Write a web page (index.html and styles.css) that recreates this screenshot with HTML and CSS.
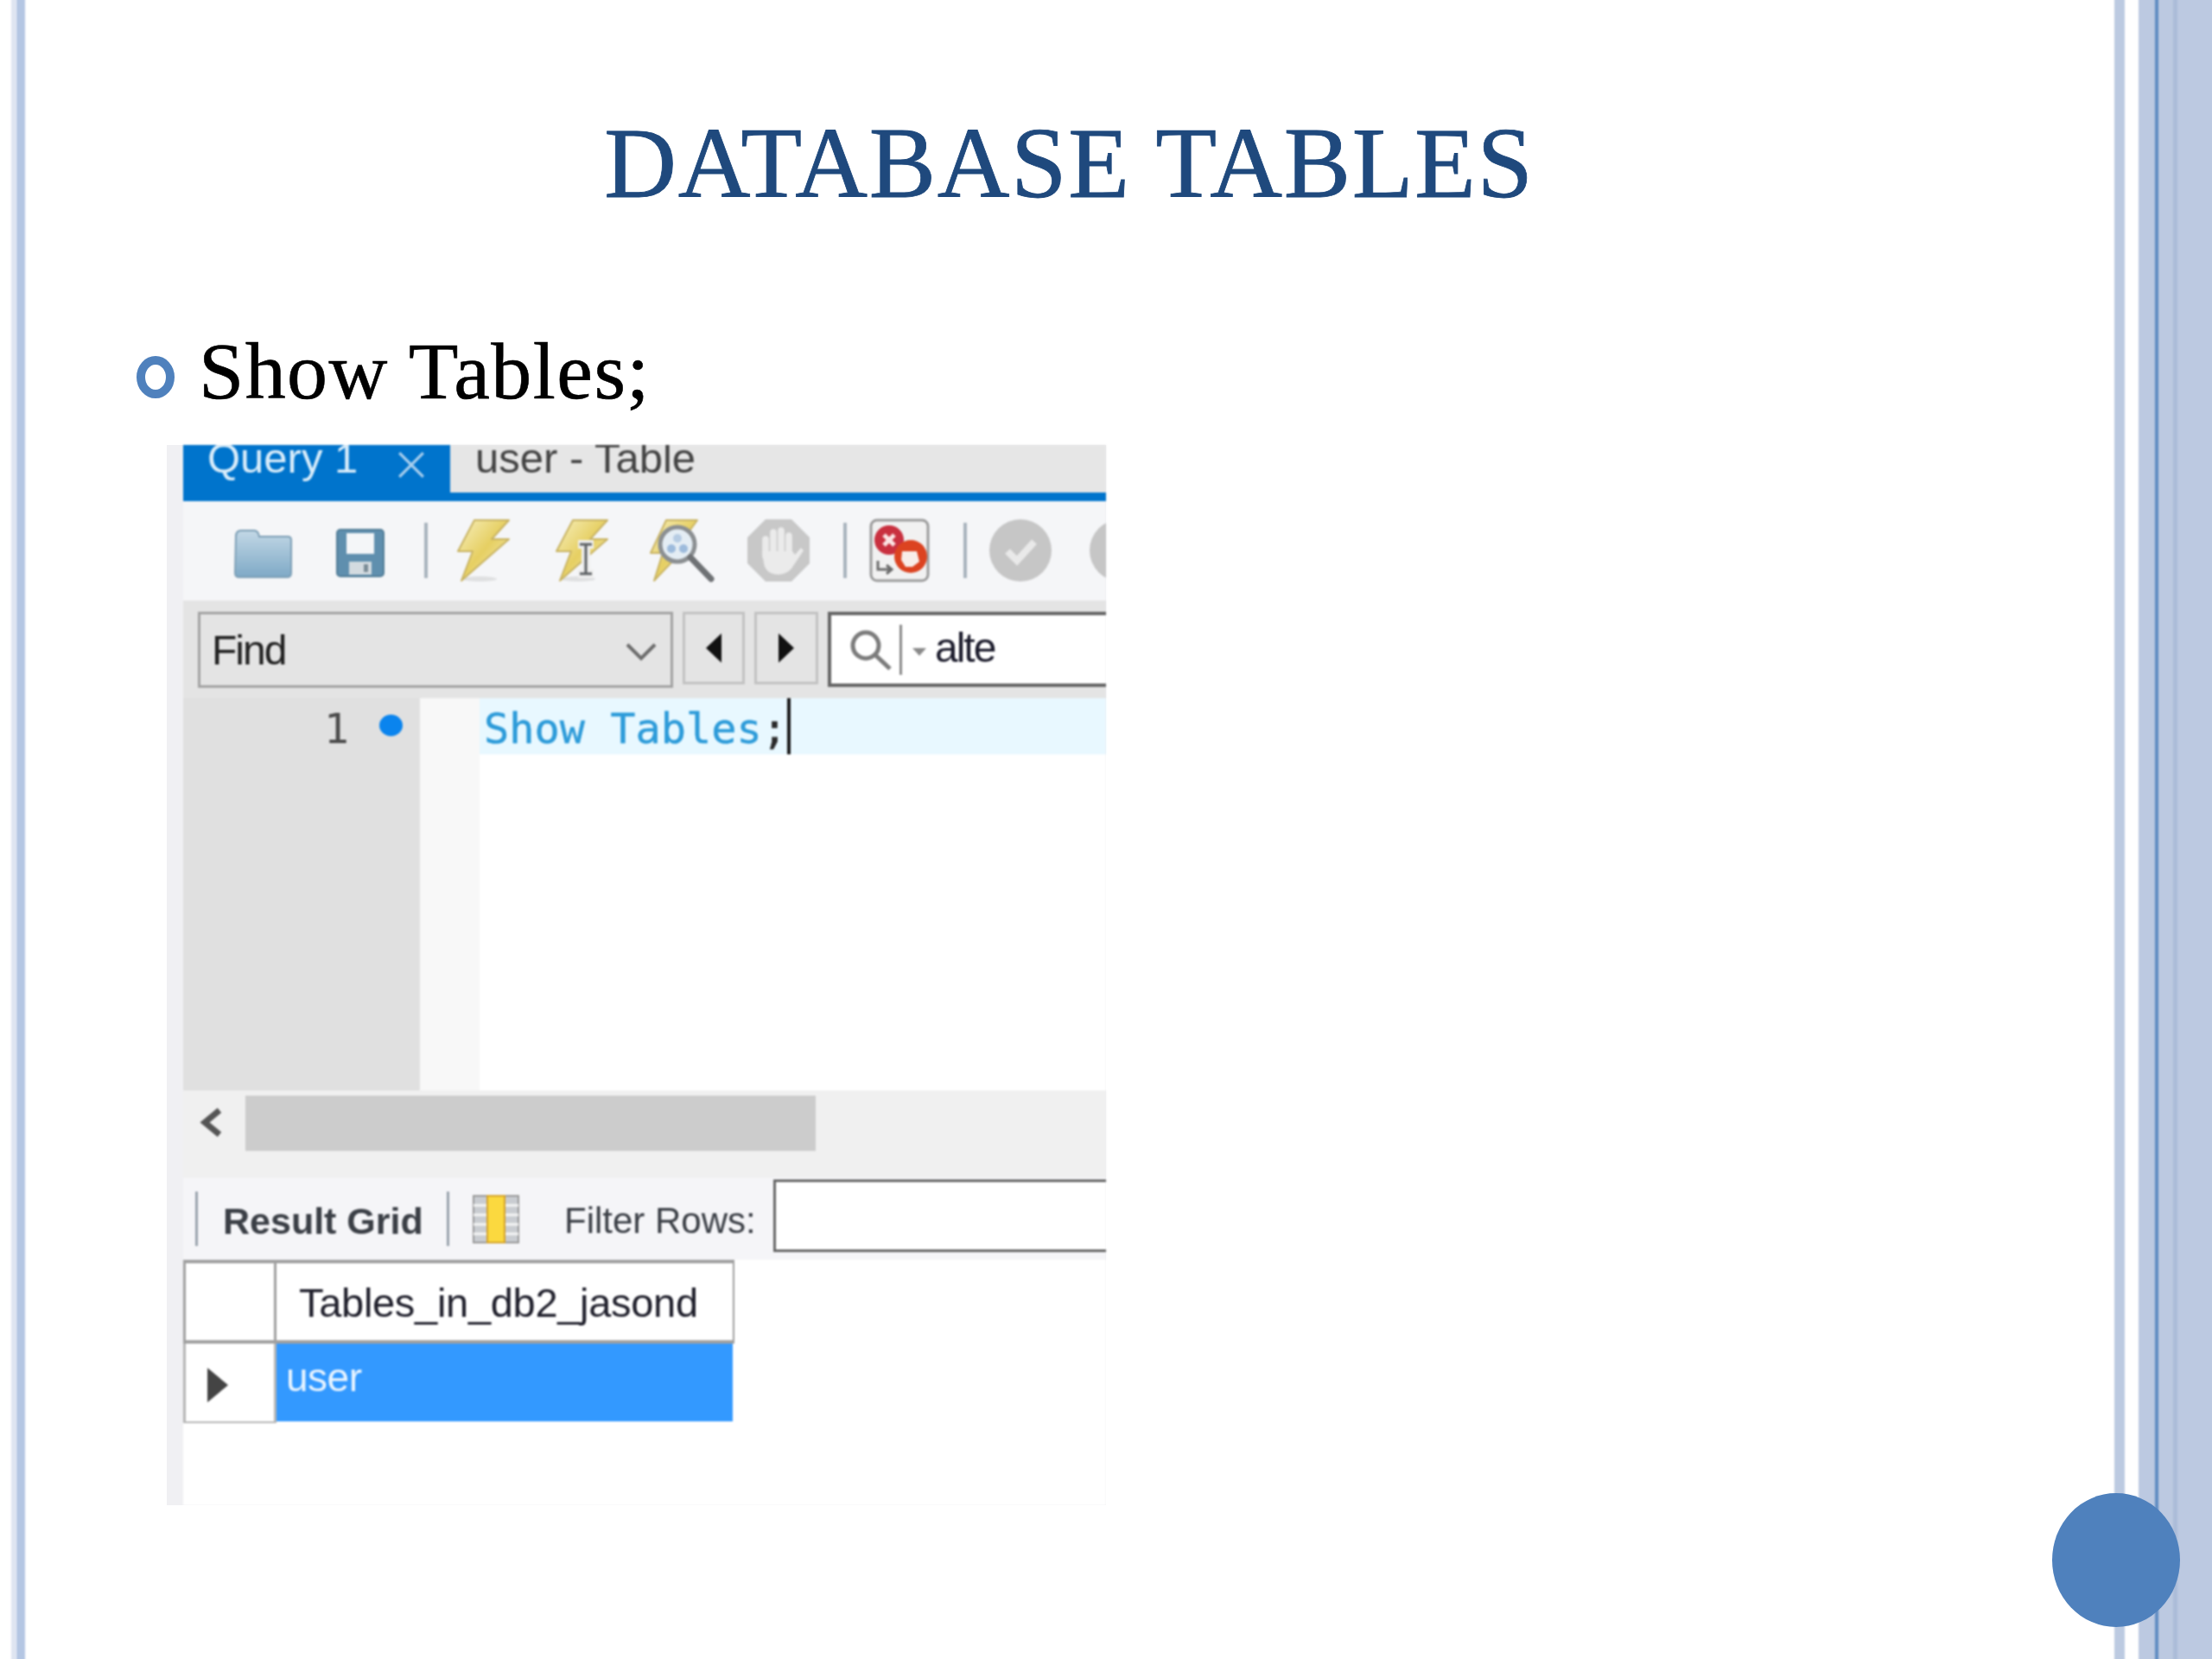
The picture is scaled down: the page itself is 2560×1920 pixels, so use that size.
FILE: index.html
```html
<!DOCTYPE html>
<html lang="en">
<head>
<meta charset="utf-8">
<title>Database Tables</title>
<link rel="stylesheet" href="styles.css">
</head>
<body>
<div class="slide">
  <div class="band band-l1"></div>
  <div class="band band-l2"></div>
  <div class="band band-r1"></div>
  <div class="band band-r2"></div>
  <div class="band band-r3"></div>
  <div class="band band-r4"></div>
  <div class="dot-big"></div>

  <main class="main">
    <h1 class="title">DATABASE TABLES</h1>
    <div class="bullet-row">
      <span class="ring"></span>
      <span class="bullet-text">Show Tables;</span>
    </div>
    <div class="shot">
      <div class="app">
        <div class="tabs">
          <div class="tab tab-on"><span class="tab-label">Query 1</span><span class="tab-x">
            <svg class="x-ico" viewBox="0 0 32 32"><path d="M3 3 29 29M29 3 3 29"/></svg></span></div>
          <div class="tab tab-off"><span class="tab-label">user - Table</span></div>
        </div>

        <div class="toolbar">
          <svg class="ic ic-folder" viewBox="0 0 68 58"><defs><linearGradient id="gf" x1="0" y1="0" x2="0" y2="1"><stop offset="0" stop-color="#c3d8e6"/><stop offset="1" stop-color="#7ea9c6"/></linearGradient></defs><path d="M3 10 Q3 3 9 3H24Q29 3 30 10H63Q67 10 67 14V52Q67 57 62 57H7Q2 57 2 52Z" fill="url(#gf)" stroke="#7d9fb6" stroke-width="2"/></svg>
          <svg class="ic ic-floppy" viewBox="0 0 56 56"><rect x="1" y="1" width="54" height="54" rx="4" fill="#5f8fae" stroke="#527d97" stroke-width="2"/><rect x="12" y="5" width="32" height="24" fill="#f4f6f8"/><rect x="15" y="38" width="26" height="15" fill="#d3dbe0"/><rect x="32" y="41" width="5" height="9" fill="#7b8c97"/></svg>
          <span class="sep sep-a"></span>
          <svg class="ic ic-bolt bolt-a" viewBox="0 0 62 74"><defs><linearGradient id="gb" x1="0" y1="0" x2="1" y2="1"><stop offset="0" stop-color="#f7f0c0"/><stop offset=".5" stop-color="#e6cf62"/><stop offset="1" stop-color="#f6efc0"/></linearGradient></defs><ellipse cx="26" cy="70" rx="20" ry="3" fill="#dfe0e1"/><path d="M20 2H60L40 24H60L5 72 18 38H1Z" fill="url(#gb)" stroke="#c9b464" stroke-width="2" stroke-linejoin="round"/></svg>
          <svg class="ic ic-bolt bolt-b" viewBox="0 0 62 74"><ellipse cx="26" cy="70" rx="20" ry="3" fill="#dfe0e1"/><path d="M20 2H60L40 24H60L5 72 18 38H1Z" fill="url(#gb)" stroke="#c9b464" stroke-width="2" stroke-linejoin="round"/><path d="M26 30H44M35 30V64M26 64H44" fill="none" stroke="#efefef" stroke-width="10"/><path d="M28 30H42M35 30V64M28 64H42" fill="none" stroke="#5d6164" stroke-width="3"/></svg>
          <svg class="ic ic-bmag" viewBox="0 0 76 74"><path d="M20 2H56L40 24H52L6 72 16 40H2Z" fill="url(#gb)" stroke="#c9b464" stroke-width="2" stroke-linejoin="round"/><circle cx="33" cy="30" r="20" fill="#e4edf4" stroke="#8b8f92" stroke-width="5"/><circle cx="26" cy="35" r="5" fill="#9dbbdc"/><circle cx="40" cy="35" r="5" fill="#9dbbdc"/><circle cx="33" cy="23" r="5" fill="#b6cce3"/><path d="M48 45 72 70" stroke="#6f7275" stroke-width="7" stroke-linecap="round"/></svg>
          <svg class="ic ic-hand" viewBox="0 0 74 74"><path d="M22 1H52L73 22V52L52 73H22L1 52V22Z" fill="#c8c8c8"/><path d="M22 44V24M31 44V16M40 44V14M49 44V20" stroke="#ebebeb" stroke-width="7.5" stroke-linecap="round"/><path d="M18 38H53L56 42 63 34 66 37 52 58Q46 65 36 65Q22 64 20 52Z" fill="#ebebeb"/></svg>
          <span class="sep sep-b"></span>
          <svg class="ic ic-stop" viewBox="0 0 70 74"><rect x="2" y="2" width="66" height="70" rx="7" fill="#f1f1f1" stroke="#9b9b9b" stroke-width="3"/><circle cx="23" cy="25" r="17" fill="#c9303f"/><path d="M17 19 29 31M29 19 17 31" stroke="#fbe4e4" stroke-width="5"/><path d="M10 49V59H26M20 54 26 59 20 64" fill="none" stroke="#6b6b6b" stroke-width="3"/><circle cx="48" cy="44" r="19" fill="#dc4320"/><path d="M38 38H55L58 50 50 56H42L37 48Z" fill="#f8eee9"/></svg>
          <span class="sep sep-c"></span>
          <svg class="ic ic-check" viewBox="0 0 74 74"><circle cx="37" cy="37" r="36" fill="#c6c6c6"/><path d="M22 38 33 49 53 27" fill="none" stroke="#e9e9e9" stroke-width="8"/></svg>
          <svg class="ic ic-next" viewBox="0 0 74 74"><circle cx="37" cy="37" r="36" fill="#c6c6c6"/></svg>
        </div>

        <div class="findbar">
          <div class="combo"><span class="combo-text">Find</span>
            <svg class="chev" viewBox="0 0 36 22"><path d="M2 3 18 19 34 3"/></svg></div>
          <div class="fbtn fbtn-prev"><svg class="tri" viewBox="0 0 18 34"><path d="M18 0V34L0 17Z"/></svg></div>
          <div class="fbtn fbtn-next"><svg class="tri" viewBox="0 0 18 34"><path d="M0 0V34L18 17Z"/></svg></div>
          <div class="search">
            <svg class="mag" viewBox="0 0 50 48"><circle cx="19" cy="19" r="15" fill="none" stroke="#7c7c7c" stroke-width="5"/><path d="M30 30 47 46" stroke="#7c7c7c" stroke-width="5"/></svg>
            <span class="search-sep"></span>
            <svg class="mini" viewBox="0 0 16 9"><path d="M0 0H16L8 9Z"/></svg>
            <span class="search-text">alte</span>
          </div>
        </div>

        <div class="editor">
          <div class="gutter"><span class="lineno">1</span><span class="lineblue"></span></div>
          <div class="margin"></div>
          <div class="code"><div class="codeline"><span class="sql">Show Tables</span><span class="semi">;</span><span class="caret"></span></div></div>
        </div>

        <div class="hscroll">
          <svg class="sarrow" viewBox="0 0 28 34"><path d="M24 3 7 17 24 31" /></svg>
          <div class="thumb"></div>
        </div>

        <div class="resultbar">
          <span class="rsep rsep-a"></span>
          <span class="rgrid">Result Grid</span>
          <span class="rsep rsep-b"></span>
          <svg class="ic-grid" viewBox="0 0 54 56"><rect x="1" y="1" width="52" height="54" fill="#c9ccd1" stroke="#9a9a9a" stroke-width="2"/><path d="M1 12H53M1 23H53M1 34H53M1 45H53" stroke="#f5f5f5" stroke-width="3"/><rect x="17" y="1" width="20" height="54" fill="#fbd93f" stroke="#d5a32a" stroke-width="2"/></svg>
          <span class="rfilter">Filter Rows:</span>
          <div class="rinput"></div>
        </div>

        <div class="grid">
          <div class="cell c-corner"></div>
          <div class="cell c-head">Tables_in_db2_jasond</div>
          <div class="cell c-mark"><svg class="mark" viewBox="0 0 24 40"><path d="M0 0 24 20 0 40Z"/></svg></div>
          <div class="cell c-sel"><span class="sel-text">user</span></div>
        </div>
      </div>
    </div>
  </main>
</div>
</body>
</html>
```

FILE: styles.css
```css
* { box-sizing: border-box; }
html, body { margin: 0; padding: 0; background: #fff; }

.slide {
  position: relative;
  width: 2560px;
  height: 1920px;
  overflow: hidden;
  background: #fff;
}

/* decorative edge bands */
.band { position: absolute; top: -4px; bottom: -4px; filter: blur(.8px); }
.band-l1 { left: 13px; width: 6px; background: #dfe5f1; }
.band-l2 { left: 19px; width: 10px; background: #b4c6e3; }
.band-r1 { left: 2447px; width: 12px; background: #bccae1; }
.band-r2 { left: 2475px; width: 90px; background: #bcc9e1; }
.band-r3 { left: 2494px; width: 4px; background: #5f8cc2; }
.band-r4 { left: 2515px; width: 5px; background: #abbcd8; }
.dot-big {
  position: absolute;
  left: 2375px;
  top: 1728px;
  width: 148px;
  height: 155px;
  border-radius: 50%;
  background: #4f81bd;
}

.main { display: flex; flex-direction: column; width: 2475px; }

.title {
  margin: 119px 0 0;
  height: 140px;
  text-align: center;
  font: 400 116px/140px "Liberation Serif", serif;
  letter-spacing: 1.6px;
  -webkit-text-stroke: .8px #1f497d;
  color: #1f497d;
  filter: blur(.5px);
}

.bullet-row {
  display: flex;
  align-items: center;
  gap: 28px;
  margin: 115px 0 0 158px;
  height: 109px;
}
.ring {
  flex: none;
  width: 44px;
  height: 49px;
  border: 10px solid #4f81bd;
  border-radius: 50%;
  margin-top: 16px;
  filter: blur(.5px);
}
.bullet-text {
  font: 400 94px/110px "Liberation Serif", serif;
  letter-spacing: 1.4px;
  -webkit-text-stroke: .6px #000;
  color: #000;
  filter: blur(.5px);
}

/* embedded screenshot */
.shot {
  width: 1087px;
  height: 1227px;
  margin: 32px 0 0 193px;
  padding-left: 19px;
  background: #f0f0f3;
}
.app {
  width: 1068px;
  height: 1227px;
  background: #fff;
  overflow: hidden;
  font-family: "Liberation Sans", Arial, sans-serif;
  filter: blur(.8px);
}

.tabs {
  display: flex;
  height: 65px;
  overflow: hidden;
  background: #e6e6e6;
  border-bottom: 10px solid #0074cc;
}
.tab { display: flex; align-items: flex-start; height: 65px; flex: none; }
.tab-on { width: 309px; padding-left: 28px; background: #0074cc; color: #d8ecfa; }
.tab-off { padding-left: 29px; color: #444; }
.tab-label { font-size: 49px; line-height: 50px; margin-top: -10px; }
.tab-on .tab-label { width: 189px; }
.tab-x { margin: 6px 0 0 30px; }
.x-ico { display: block; width: 34px; height: 34px; }
.x-ico path { fill: none; stroke: #a9cfee; stroke-width: 3; }

.toolbar {
  display: flex;
  align-items: center;
  height: 115px;
  padding-bottom: 2px;
  background: #f5f6f8;
  overflow: hidden;
}
.ic { display: block; flex: none; }
.ic-folder { width: 68px; height: 58px; margin: 6px 0 0 58px; }
.ic-floppy { width: 56px; height: 56px; margin: 7px 0 0 51px; }
.sep { flex: none; width: 4px; height: 64px; background: #a9b3bd; }
.sep-a { margin-left: 46px; }
.ic-bolt { width: 62px; height: 74px; }
.bolt-a { margin-left: 34px; }
.bolt-b { margin-left: 52px; }
.ic-bmag { width: 76px; height: 74px; margin-left: 46px; }
.ic-hand { width: 74px; height: 74px; margin-left: 37px; }
.sep-b { margin-left: 38px; }
.ic-stop { width: 70px; height: 74px; margin-left: 26px; }
.sep-c { margin-left: 39px; }
.ic-check { width: 74px; height: 74px; margin-left: 25px; }
.ic-next { width: 74px; height: 74px; margin-left: 42px; }

.findbar {
  display: flex;
  align-items: flex-start;
  height: 113px;
  padding: 13px 0 0 17px;
  background: #e4e4e4;
  overflow: hidden;
}
.combo {
  display: flex;
  align-items: center;
  justify-content: space-between;
  flex: none;
  width: 550px;
  height: 88px;
  padding: 0 16px 0 13px;
  border: 3px solid #a3a3a3;
}
.combo-text { font-size: 48px; letter-spacing: -2px; color: #222; }
.chev { width: 36px; height: 22px; margin-top: 4px; }
.chev path { fill: none; stroke: #6c6c6c; stroke-width: 4; }
.fbtn {
  display: flex;
  align-items: center;
  justify-content: center;
  flex: none;
  height: 84px;
  border: 3px solid #c2c2c2;
}
.fbtn-prev { width: 72px; margin-left: 11px; }
.fbtn-next { width: 74px; margin-left: 11px; }
.tri { width: 18px; height: 34px; fill: #111; }
.search {
  display: flex;
  align-items: center;
  flex: none;
  width: 340px;
  height: 87px;
  margin-left: 11px;
  padding-left: 21px;
  background: #fff;
  border: 4px solid #666;
  border-right: 0;
}
.mag { width: 50px; height: 48px; }
.search-sep { width: 3px; height: 58px; margin-left: 8px; background: #8a8a8a; }
.mini { width: 16px; height: 9px; margin: 6px 0 0 12px; fill: #8a8a8a; }
.search-text { margin: -4px 0 0 10px; font-size: 48px; letter-spacing: -2px; color: #1c1c2c; }

.editor { display: flex; height: 454px; background: #fff; }
.gutter {
  display: flex;
  align-items: flex-start;
  flex: none;
  width: 274px;
  padding-left: 163px;
  background: #e0e0e0;
}
.lineno {
  font: 48px/70px "DejaVu Sans Mono", monospace;
  color: #4b4b4b;
}
.lineblue {
  width: 27px;
  height: 25px;
  margin: 19px 0 0 35px;
  border-radius: 50%;
  background: #0a84ee;
}
.margin { flex: none; width: 69px; background: #f8f8f8; }
.code { flex: 1; min-width: 0; }
.codeline {
  display: flex;
  height: 65px;
  padding-left: 5px;
  background: #e8f8ff;
  font: 48.6px/71px "DejaVu Sans Mono", monospace;
  white-space: pre;
}
.sql { color: #2d9bd9; -webkit-text-stroke: .4px #2d9bd9; }
.semi { color: #2a2a2a; -webkit-text-stroke: .6px #2a2a2a; }
.caret { width: 4px; background: #1a1a1a; }

.hscroll {
  display: flex;
  align-items: flex-start;
  height: 101px;
  padding-top: 6px;
  background: #f0f0f0;
}
.sarrow { width: 28px; height: 34px; margin: 14px 0 0 18px; fill: none; stroke: #555; stroke-width: 7; }
.thumb { width: 660px; height: 64px; margin-left: 26px; background: #cccccc; }

.resultbar {
  display: flex;
  align-items: center;
  height: 95px;
  background: #f5f5f8;
  overflow: hidden;
}
.rsep { flex: none; width: 3px; height: 63px; background: #9aa3ad; }
.rsep-a { margin-left: 14px; }
.rsep-b { margin-left: 27px; }
.rgrid { flex: none; width: 232px; margin: 5px 0 0 29px; font-size: 43px; font-weight: 700; color: #3b3f46; white-space: nowrap; }
.ic-grid { flex: none; width: 54px; height: 56px; margin-left: 27px; }
.rfilter { flex: none; width: 222px; margin: 5px 0 0 52px; font-size: 42px; color: #3b3f46; white-space: nowrap; }
.rinput {
  flex: none;
  width: 400px;
  height: 84px;
  margin: -8px 0 0 20px;
  background: #fff;
  border: 3px solid #666;
}

.grid {
  display: grid;
  grid-template-columns: 108px 530px;
  grid-template-rows: 97px 92px;
  width: 638px;
}
.cell { display: flex; align-items: center; }
.c-corner { border: solid #a0a0a0; border-width: 4px 3px 4px 3px; }
.c-head {
  padding: 2px 0 0 26px;
  border: solid #a0a0a0;
  border-width: 4px 2px 4px 0;
  font-size: 47px;
  letter-spacing: -.3px;
  color: #20202c;
  white-space: nowrap;
}
.c-mark { padding: 6px 0 0 25px; border: solid #b5b5b5; border-width: 0 3px 2px 3px; }
.mark { width: 24px; height: 40px; fill: #444; }
.c-sel { align-items: flex-start; margin: 0 2px 2px 0; background: #3399ff; }
.sel-text { margin: 14px 0 0 11px; font-size: 46px; line-height: 50px; letter-spacing: -.5px; color: #e8f4ff; }
```
